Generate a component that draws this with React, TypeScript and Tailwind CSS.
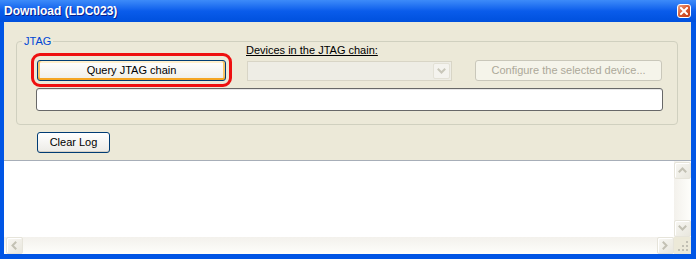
import React from "react";

function Chevron({ dir, color = "#C3C1B4" }: { dir: "up" | "down" | "left" | "right"; color?: string }) {
  const paths: Record<string, string> = {
    up: "M1.5 5.5 L4.5 2.5 L7.5 5.5",
    down: "M1.5 2.5 L4.5 5.5 L7.5 2.5",
    left: "M5.5 1.5 L2.5 4.5 L5.5 7.5",
    right: "M2.5 1.5 L5.5 4.5 L2.5 7.5",
  };
  return (
    <svg width="9" height="9" viewBox="0 0 9 9">
      <path d={paths[dir]} fill="none" stroke={color} strokeWidth="2" strokeLinecap="square" />
    </svg>
  );
}

function ScrollBtn({ dir }: { dir: "up" | "down" | "left" | "right" }) {
  return (
    <div className="w-[17px] h-[17px] flex items-center justify-center rounded-[2px] border border-[#E6E4DA] bg-gradient-to-br from-[#F8F7F3] to-[#E9E7DE] shadow-[inset_1px_1px_0_#FFFFFF]">
      <Chevron dir={dir} />
    </div>
  );
}

export default function App() {
  return (
    <div className="w-[696px] h-[259px] flex flex-col bg-[#0055E5] font-['Liberation_Sans',Arial,sans-serif] text-[11px] text-black">
      {/* Title bar */}
      <div className="h-[22px] flex items-center justify-between pl-[4px] pr-[5px] bg-gradient-to-b from-[#3D8BF9] via-[#0A5CEB] to-[#0050DD]">
        <span className="text-white font-bold text-[12px] leading-[14px] [text-shadow:1px_1px_0_#0A1E8C]">
          Download (LDC023)
        </span>
        <div className="w-[14px] h-[14px] flex items-center justify-center rounded-[3px] border border-white bg-gradient-to-br from-[#EBA283] via-[#D8582F] to-[#C23C14]">
          <svg width="8" height="8" viewBox="0 0 8 8">
            <path d="M1 1 L7 7 M7 1 L1 7" stroke="white" strokeWidth="2" strokeLinecap="square" />
          </svg>
        </div>
      </div>

      {/* Client */}
      <div className="flex-1 flex flex-col ml-[4px] mr-[5px] mb-[5px]">
        <div className="h-[138px] bg-[#ECE9D8] flex flex-col">
          {/* Group box */}
          <div className="relative mt-[19px] ml-[12px] mr-[13px] h-[84px] border border-[#D0D0BF] rounded-[4px] flex flex-col pt-[2px]">
            <span className="absolute -top-[8px] left-[5px] px-[2px] bg-[#ECE9D8] text-[#0046D5] leading-[14px]">
              JTAG
            </span>
            <div className="flex items-end pl-[20px]">
              <div className="relative w-[189px] h-[21px]">
                <div className="absolute -left-[6px] -top-[7px] -right-[6px] -bottom-[6px] border-[3px] border-[#EE1010] rounded-[9px]" />
                <div className="relative w-full h-full flex items-center justify-center rounded-[3px] border border-[#003C74] bg-gradient-to-b from-[#FFFFFF] to-[#EFEEE7] shadow-[inset_0_-2px_0_#F5A623,inset_2px_0_0_#F9C66A,inset_-2px_0_0_#F9C66A,inset_0_2px_0_#FFEFCC]">
                  Query JTAG chain
                </div>
              </div>
              <div className="ml-[21px] flex flex-col w-[205px]">
                <span className="underline leading-[13px] -ml-[1px]">Devices in the JTAG chain:</span>
                <div className="mt-[4px] h-[20px] flex items-stretch border border-[#D8D5C6] bg-[#EEEDE5] p-[1px]">
                  <div className="flex-1" />
                  <div className="w-[17px] flex items-center justify-center rounded-[2px] border border-[#E3E1D6] bg-[#F4F3EE]">
                    <Chevron dir="down" color="#C9C7BA" />
                  </div>
                </div>
              </div>
              <div className="ml-[23px] w-[187px] h-[21px] flex items-center justify-center rounded-[3px] border border-[#C9C7BA] bg-[#F5F4EA] text-[#ACA899]">
                Configure the selected device...
              </div>
            </div>
            <div className="mt-[7px] ml-[19px] w-[627px] h-[23px] rounded-[3px] border border-[#686868] bg-white shadow-[inset_0_1px_0_#E8E8E8]" />
          </div>
          <div className="mt-[7px] ml-[33px] w-[73px] h-[21px] flex items-center justify-center rounded-[3px] border border-[#003C74] bg-gradient-to-b from-[#FFFFFF] to-[#ECEBE6] shadow-[inset_0_-1px_0_#D6D0C5]">
            Clear Log
          </div>
        </div>

        {/* Log area */}
        <div className="flex-1 flex flex-col bg-white border-t border-[#A7AEB8]">
          <div className="flex-1 flex">
            <div className="flex-1" />
            <div className="w-[17px] flex flex-col justify-between bg-gradient-to-r from-[#F3F1EC] to-[#FEFEFB] pt-[1px]">
              <ScrollBtn dir="up" />
              <ScrollBtn dir="down" />
            </div>
          </div>
          <div className="h-[17px] flex">
            <div className="flex-1 flex justify-between bg-gradient-to-b from-[#F3F1EC] to-[#FEFEFB] pl-[2px]">
              <ScrollBtn dir="left" />
              <ScrollBtn dir="right" />
            </div>
            <div className="w-[17px] bg-[#ECE9D8] flex items-end justify-end p-[2px]">
              <svg width="11" height="11" viewBox="0 0 11 11">
                <rect x="8" y="0" width="2" height="2" fill="#C1BFB3" />
                <rect x="4" y="4" width="2" height="2" fill="#C1BFB3" />
                <rect x="8" y="4" width="2" height="2" fill="#C1BFB3" />
                <rect x="0" y="8" width="2" height="2" fill="#C1BFB3" />
                <rect x="4" y="8" width="2" height="2" fill="#C1BFB3" />
                <rect x="8" y="8" width="2" height="2" fill="#C1BFB3" />
              </svg>
            </div>
          </div>
        </div>
      </div>
    </div>
  );
}
